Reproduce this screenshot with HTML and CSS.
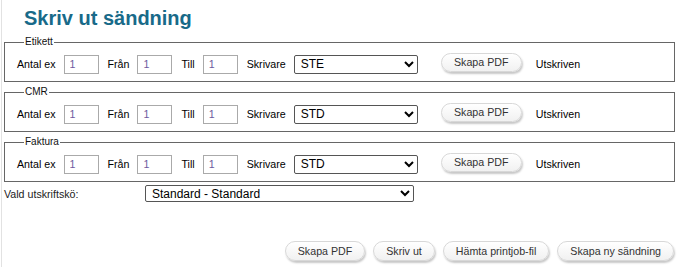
FILE: index.html
```html
<!DOCTYPE html>
<html lang="sv">
<head>
    <meta charset="UTF-8">
    <title>Skriv ut sändning</title>
    <link rel="stylesheet" href="styles.css">
</head>
<body>
    <div class="page">
        <h1>Skriv ut sändning</h1>

        <fieldset class="group">
            <legend>Etikett</legend>
            <div class="row">
                <label>Antal ex</label><input class="num" type="text" value="1">
                <label>Från</label><input class="num" type="text" value="1">
                <label>Till</label><input class="num" type="text" value="1">
                <label>Skrivare</label>
                <select class="printer"><option>STE</option></select>
                <button class="btn row-btn">Skapa PDF</button>
                <span class="status">Utskriven</span>
            </div>
        </fieldset>

        <fieldset class="group">
            <legend>CMR</legend>
            <div class="row">
                <label>Antal ex</label><input class="num" type="text" value="1">
                <label>Från</label><input class="num" type="text" value="1">
                <label>Till</label><input class="num" type="text" value="1">
                <label>Skrivare</label>
                <select class="printer"><option>STD</option></select>
                <button class="btn row-btn">Skapa PDF</button>
                <span class="status">Utskriven</span>
            </div>
        </fieldset>

        <fieldset class="group">
            <legend>Faktura</legend>
            <div class="row">
                <label>Antal ex</label><input class="num" type="text" value="1">
                <label>Från</label><input class="num" type="text" value="1">
                <label>Till</label><input class="num" type="text" value="1">
                <label>Skrivare</label>
                <select class="printer"><option>STD</option></select>
                <button class="btn row-btn">Skapa PDF</button>
                <span class="status">Utskriven</span>
            </div>
        </fieldset>

        <div class="queue">
            <span class="queue-label">Vald utskriftskö:</span>
            <select class="queue-select"><option>Standard - Standard</option></select>
        </div>

        <div class="actions">
            <button class="btn">Skapa PDF</button>
            <button class="btn">Skriv ut</button>
            <button class="btn">Hämta printjob-fil</button>
            <button class="btn">Skapa ny sändning</button>
        </div>
    </div>
</body>
</html>
```

FILE: styles.css
```css
body {
    margin: 0;
    padding: 0;
    font-family: Arial, "Liberation Sans", sans-serif;
    font-size: 8pt;
    color: #000;
    background-color: #fff;
}
.page {
    margin-left: 1px;
    border-left: 1px solid #e2e2e2;
    min-height: 267px;
    padding: 0 3px 0 2px;
}
h1 {
    margin: 0;
    padding: 7px 0 0 20px;
    height: 37px;
    font-size: 15pt;
    font-weight: bold;
    color: #186a89;
    box-sizing: border-box;
}
.group {
    margin: 0 0 5px 0;
    padding: 7px 12px 7px 12px;
    border: 1px solid #666;
    min-width: 0;
}
legend {
    padding: 0 1px;
    margin-left: 7px;
    font-size: 7.5pt;
    line-height: 10px;
    color: #111;
}
.row {
    display: flex;
    align-items: center;
    height: 20px;
}
label {
    margin-right: 8px;
}
.num {
    width: 35px;
    height: 19px;
    box-sizing: border-box;
    margin: 0 9px 0 0;
    padding: 0 5px;
    border: 1px solid #aaa;
    font-family: Arial, "Liberation Sans", sans-serif;
    font-size: 8pt;
    color: #6e5a9e;
}
.printer {
    width: 124px;
    height: 19px;
    margin-right: 23px;
}
select {
    box-sizing: border-box;
    border: 1px solid #555;
    border-radius: 2px;
    background-color: #fff;
    font-family: Arial, "Liberation Sans", sans-serif;
    font-size: 9pt;
    color: #000;
    padding: 0 2px;
}
.btn {
    height: 19px;
    padding: 0 12px;
    border: 1px solid #d8d8d8;
    border-radius: 10px;
    background: linear-gradient(#ffffff, #f1f1f1);
    box-shadow: 1px 2px 2px #c8c8c8;
    font-family: Arial, "Liberation Sans", sans-serif;
    font-size: 8pt;
    color: #333;
    white-space: nowrap;
}
.row-btn {
    width: 81px;
    padding: 0;
    margin-right: 14px;
    position: relative;
    top: -2px;
}
.queue {
    display: flex;
    align-items: center;
    margin-top: -3px;
    height: 19px;
}
.queue-label {
    width: 141px;
    color: #222;
}
.queue-select {
    width: 269px;
    height: 17px;
}
.actions {
    display: flex;
    justify-content: flex-end;
    gap: 8px;
    margin-top: 38px;
    padding-right: 1px;
}
.actions .btn {
    height: 20px;
    padding: 0 12px;
}
```
